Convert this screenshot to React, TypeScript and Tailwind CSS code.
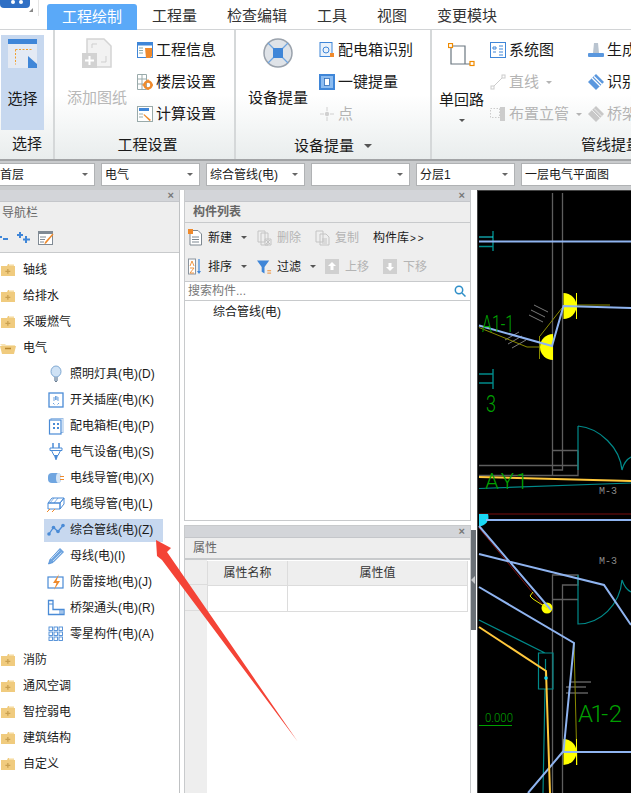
const font = "font-['Liberation_Sans','Noto_Sans_CJK_SC',sans-serif]";

const tabs = [
  { label: "工程量", w: "w-[75px]" },
  { label: "检查编辑", w: "w-[90px]" },
  { label: "工具", w: "w-[60px]" },
  { label: "视图", w: "w-[60px]" },
  { label: "变更模块", w: "w-[90px]" },
];

function FolderIcon({ open }: { open?: boolean }) {
  if (open) {
    return (
      <svg width="16" height="14" viewBox="0 0 16 14" className="shrink-0">
        <path d="M0 3h5l1 1h9v2H3z" fill="#f7e3b4" />
        <path d="M0 5h16l-2 8H2z" fill="#f0cb7e" />
        <path d="M5 7.500h6" stroke="#b9872f" strokeWidth="1.500" />
      </svg>
    );
  }
  return (
    <svg width="16" height="14" viewBox="0 0 16 14" className="shrink-0">
      <path d="M1 3h6l1-2h6v2h1v10H1z" fill="#f0cb7e" />
      <path d="M9 1h5v1.500H9z" fill="#fbeccb" />
      <path d="M7.200 6h1.300v1.800h1.800v1.200H8.500v1.800H7.200V9H5.400V7.800h1.800z" fill="#c9a050" />
    </svg>
  );
}

function ChildIcon({ name }: { name: string }) {
  const b = "#4a8bd6";
  const common = { width: 18, height: 18, viewBox: "0 0 18 18", className: "shrink-0" };
  switch (name) {
    case "bulb":
      return (
        <svg {...common}>
          <ellipse cx="9" cy="6.500" rx="5" ry="5.500" fill="#cfe2f5" stroke="#7fa8d2" />
          <path d="M7 12h4v4H7z" fill="#9fb0c2" />
          <path d="M8 16.500h2" stroke="#6b7d90" />
        </svg>
      );
    case "socket":
      return (
        <svg {...common}>
          <rect x="2" y="2" width="14" height="14" fill="#fff" stroke={b} strokeWidth="1.300" />
          <path d="M7 6v4M8.500 5v4M11 6v4M9.800 5v4M6 12l1.500 1.500M12 12l-1.500 1.500" stroke={b} strokeWidth=".8" />
        </svg>
      );
    case "box":
      return (
        <svg {...common}>
          <rect x="4" y="1.500" width="12" height="14" fill="#fff" stroke="#9dbfe6" />
          <rect x="2.500" y="3" width="11.500" height="14" fill="#fff" stroke={b} strokeWidth="1.200" />
          <path d="M6 6h2v2H6zM10 6h2v2h-2zM6 10h2v2H6zM10 10h2v2h-2z" fill={b} />
        </svg>
      );
    case "plug":
      return (
        <svg {...common}>
          <path d="M6 0v5M12 0v5" stroke={b} strokeWidth="1.500" />
          <path d="M3 5h12v2.500H3zM4.500 7.500l2.500 5h4l2.500-5z" fill="#fff" stroke={b} />
          <path d="M7 12.500h4L9.500 17h-1z" fill={b} />
        </svg>
      );
    case "wire":
      return (
        <svg {...common}>
          <rect x="1" y="4" width="13" height="10" rx="4" fill="#6fa5e0" />
          <ellipse cx="11.500" cy="9" rx="2.500" ry="5" fill="#d5e5f6" />
          <path d="M13 7.500h4M13 10.500h4" stroke="#ef8a2c" strokeWidth="1" />
        </svg>
      );
    case "cable":
      return (
        <svg {...common}>
          <path d="M1 8l4-5h12l-4 5zM1 8h12v6H1zM13 8l4-5v6l-4 5z" fill="#fff" stroke={b} />
          <path d="M7 3l-4 5M11 3l-4 5" stroke={b} strokeWidth=".7" />
          <path d="M0 17l3-3M5 17l3-3" stroke="#ef8a2c" />
        </svg>
      );
    case "line":
      return (
        <svg {...common}>
          <path d="M2 13L6.500 6.500l4.500 4L16.500 4" fill="none" stroke={b} strokeWidth="1.300" />
          <circle cx="2" cy="13" r="1.800" fill={b} />
          <circle cx="6.500" cy="6.500" r="1.800" fill={b} />
          <circle cx="11" cy="10.500" r="1.800" fill={b} />
          <circle cx="16" cy="4.500" r="1.800" fill={b} />
        </svg>
      );
    case "pencil":
      return (
        <svg {...common}>
          <path d="M13 1.500l3.500 3.500L6 15.500l-4.500 1.500L3 12.500z" fill="#6fa5e0" stroke={b} strokeWidth=".8" />
          <path d="M4 12l8.500-8.500M6 14l8.500-8.500" stroke="#fff" strokeWidth=".6" />
        </svg>
      );
    case "bolt":
      return (
        <svg {...common}>
          <rect x="1" y="4" width="15" height="11" fill="#fff" stroke={b} strokeWidth="1.200" />
          <path d="M12 1L6 10h3.500L7 17l6-9H9.500z" fill="#ef8a2c" />
        </svg>
      );
    case "elbow":
      return (
        <svg {...common}>
          <path d="M1.500 1.500h4.500v9h11v5H1.500z" fill="#fff" stroke={b} strokeWidth="1.300" />
          <path d="M1.500 5h4.500M13 11v4M15 11v4" stroke={b} />
        </svg>
      );
    default:
      return (
        <svg {...common}>
          {[2, 7, 12].flatMap((y) =>
            [2, 7, 12].map((x) => (
              <rect key={`${x}-${y}`} x={x} y={y} width="3.500" height="3.500" fill="#fff" stroke={b} strokeWidth=".9" />
            )),
          )}
        </svg>
      );
  }
}

function Caret({ color = "#555" }: { color?: string }) {
  return <span className="inline-block w-0 h-0 border-x-[3px] border-x-transparent border-t-[3px]" style={{ borderTopColor: color }} />;
}

function RibbonRow({ icon, label, disabled, caret }: { icon: React.ReactNode; label: string; disabled?: boolean; caret?: boolean }) {
  return (
    <div className={`flex items-center h-[32px] gap-[3px] text-[15px] whitespace-nowrap ${disabled ? "text-[#b4b4b4]" : "text-[#1a1a1a]"}`}>
      <span className="w-[16px] h-[18px] flex items-center justify-center shrink-0">{icon}</span>
      <span>{label}</span>
      {caret && <span className="ml-[4px] flex"><Caret color="#b4b4b4" /></span>}
    </div>
  );
}

function RibbonLarge({ icon, label, disabled, w }: { icon: React.ReactNode; label: string; disabled?: boolean; w: string }) {
  return (
    <div className={`flex flex-col items-center h-[95px] shrink-0 ${w}`}>
      <div className="h-[51px] pt-[3px] flex items-start justify-center">{icon}</div>
      <div className={`text-[15px] leading-[24px] whitespace-nowrap ${disabled ? "text-[#b8b8b8]" : "text-[#1a1a1a]"}`}>{label}</div>
    </div>
  );
}

function GroupLabel({ children }: { children: React.ReactNode }) {
  return <div className="h-[28px] flex items-center justify-center gap-[10px] text-[15px] text-[#1a1a1a] whitespace-nowrap">{children}</div>;
}

function Ribbon() {
  const o = "#ef8a2c";
  const b = "#3f86d8";
  return (
    <div className="h-[129px] flex bg-gradient-to-b from-white from-50% to-[#e9eded]">
      <div className="w-[55px] shrink-0 border-r-2 border-[#d5d8d9] pl-[1px] pt-[5px]">
        <div className="w-[43px] h-[95px] bg-[#c7d8ef] flex flex-col items-center">
          <svg width="29" height="29" viewBox="0 0 29 29" className="mt-[4px]">
            <rect width="29" height="29" fill="#e4eaf4" />
            <rect width="29" height="5" fill="#3f86d8" />
            <path d="M7.500 10.500h17M7.500 10.500v15" stroke="#f0a030" strokeDasharray="2 1.500" fill="none" />
            <path d="M20 17l9 8v4h-9z" fill="#3f86d8" />
          </svg>
          <div className="mt-[19px] text-[15px] leading-[24px] text-[#1a1a1a]">选择</div>
        </div>
        <GroupLabel>选择</GroupLabel>
      </div>

      <div className="w-[181px] shrink-0 border-r-2 border-[#d5d8d9]">
        <div className="flex h-[101px] pt-[5px] pl-[12px]">
          <RibbonLarge
            w="w-[60px]"
            disabled
            label="添加图纸"
            icon={
              <svg width="30" height="31" viewBox="0 0 30 31">
                <path d="M5 1h17l7 7v21H5z" fill="#f2f2f2" stroke="#d4d4d4" strokeWidth="1.500" />
                <path d="M10 10V6h5M24 18v6h-5" fill="none" stroke="#cfcfcf" />
                <rect x="0" y="15" width="15" height="15" fill="#d2d2d2" />
                <path d="M7.500 18v9M3 22.500h9" stroke="#fff" strokeWidth="2" />
              </svg>
            }
          />
          <div className="ml-[10px] flex flex-col -mt-[1px]">
            <RibbonRow
              label="工程信息"
              icon={
                <svg width="16" height="16" viewBox="0 0 16 16">
                  <rect x=".5" y=".5" width="15" height="15" fill="#fff" stroke={b} />
                  <rect width="16" height="3.500" fill={b} />
                  <path d="M2 6h4M2 8.500h4M2 11h4" stroke="#8aa" />
                  <path d="M8 6h7v8l-2 2H9z" fill={o} />
                </svg>
              }
            />
            <RibbonRow
              label="楼层设置"
              icon={
                <svg width="16" height="16" viewBox="0 0 16 16">
                  <path d="M.5.500h9v15h-9zM.5 5h9M.5 10h9M5 .5v15" fill="none" stroke="#9aa" />
                  <circle cx="11" cy="11" r="3.500" fill="none" stroke={o} strokeWidth="2.500" />
                  <path d="M11 5.500v2M11 14.500v2M5.500 11h2M14.500 11h2" stroke={o} strokeWidth="1.500" />
                </svg>
              }
            />
            <RibbonRow
              label="计算设置"
              icon={
                <svg width="16" height="16" viewBox="0 0 16 16">
                  <rect x=".5" y=".5" width="15" height="15" fill="#fff" stroke="#9aa" />
                  <rect x="2" y="2" width="10" height="3" fill={b} />
                  <path d="M2 8h4M2 11h4" stroke="#9aa" />
                  <path d="M7 8l7 6-1.500 1-6-6z" fill={o} />
                </svg>
              }
            />
          </div>
        </div>
        <GroupLabel>
          <span className="pl-[6px]">工程设置</span>
        </GroupLabel>
      </div>

      <div className="w-[196px] shrink-0 border-r-2 border-[#d5d8d9]">
        <div className="flex h-[101px] pt-[5px] pl-[12px]">
          <RibbonLarge
            w="w-[60px]"
            label="设备提量"
            icon={
              <svg width="30" height="30" viewBox="0 0 30 30">
                <circle cx="15" cy="15" r="14" fill="#dfe3e8" stroke="#9aa2ac" strokeWidth="1.500" />
                <path d="M5 5l20 20M25 5L5 25" stroke="#6fa5e0" strokeWidth="1.200" />
                <rect x="10" y="10" width="10" height="10" fill="#3f86d8" />
              </svg>
            }
          />
          <div className="ml-[11px] flex flex-col -mt-[1px]">
            <RibbonRow
              label="配电箱识别"
              icon={
                <svg width="16" height="16" viewBox="0 0 16 16">
                  <rect x="1" y=".5" width="12" height="14" fill="#eaf2fb" stroke={b} />
                  <circle cx="7" cy="8" r="3" fill="none" stroke={b} />
                  <rect x="11" y="11" width="4" height="4" fill={o} />
                </svg>
              }
            />
            <RibbonRow
              label="一键提量"
              icon={
                <svg width="16" height="16" viewBox="0 0 16 16">
                  <rect width="16" height="16" fill={b} />
                  <rect x="2" y="2" width="12" height="12" fill="#8cbcf0" />
                  <rect x="5.500" y="4.500" width="5" height="7" fill="#fff" stroke="#2d6cb8" strokeWidth=".8" />
                </svg>
              }
            />
            <RibbonRow
              disabled
              label="点"
              icon={
                <svg width="16" height="16" viewBox="0 0 16 16">
                  <circle cx="8" cy="8" r="2.200" fill="#d0d0d0" />
                  <path d="M8 1v4M8 11v4M1 8h4M11 8h4" stroke="#d0d0d0" />
                </svg>
              }
            />
          </div>
        </div>
        <div className="h-[28px] pt-[1px]">
          <GroupLabel>
            <span>设备提量</span>
            <span className="inline-block w-0 h-0 border-x-[4px] border-x-transparent border-t-[4px] border-t-[#555]" />
          </GroupLabel>
        </div>
      </div>

      <div className="flex-1 min-w-0 overflow-hidden">
        <div className="flex h-[101px] pt-[5px] pl-[6px]">
          <div className="w-[47px] shrink-0 flex flex-col items-center h-[95px]">
            <svg width="27" height="24" viewBox="0 0 27 24" className="mt-[8px]">
              <path d="M3 3h14v18h6M3 3v18h20" fill="none" stroke="#6b7780" strokeWidth="1.200" />
              <rect x=".5" y=".5" width="4" height="4" fill="#fff" stroke="#ef8a00" strokeWidth="1.200" />
              <rect x="22" y="18.500" width="4" height="4" fill="#fff" stroke="#ef8a00" strokeWidth="1.200" />
            </svg>
            <div className="mt-[21px] text-[15px] leading-[24px] text-[#1a1a1a] whitespace-nowrap">单回路</div>
            <div className="mt-[7px] flex"><Caret /></div>
          </div>
          <div className="ml-[5px] w-[98px] shrink-0 flex flex-col -mt-[1px]">
            <RibbonRow
              label="系统图"
              icon={
                <svg width="16" height="16" viewBox="0 0 16 16">
                  <rect x=".5" y=".5" width="15" height="15" fill="#fff" stroke={b} />
                  <path d="M3 5h3v2H3zM9 4h4M9 7h4M9 10h4M9 13h4M3 10h3" stroke={b} fill="none" />
                </svg>
              }
            />
            <RibbonRow
              disabled
              caret
              label="直线"
              icon={
                <svg width="16" height="16" viewBox="0 0 16 16">
                  <path d="M3 13L13 3" stroke="#ccc" />
                  <rect x="1" y="12" width="3" height="3" fill="#fff" stroke="#ccc" />
                  <rect x="12" y="1" width="3" height="3" fill="#fff" stroke="#ccc" />
                </svg>
              }
            />
            <RibbonRow
              disabled
              caret
              label="布置立管"
              icon={
                <svg width="16" height="16" viewBox="0 0 16 16">
                  <rect x=".5" y="2.500" width="9" height="9" fill="none" stroke="#ccc" strokeDasharray="1.500 1.500" />
                  <rect x="10" y="1" width="5" height="14" fill="#ccc" />
                </svg>
              }
            />
          </div>
          <div className="flex flex-col -mt-[1px] shrink-0">
            <RibbonRow
              label="生成"
              icon={
                <svg width="16" height="16" viewBox="0 0 16 16">
                  <path d="M6 1h4l1 10H5z" fill="#b9c4d0" />
                  <rect y="11" width="16" height="4" rx="1" fill="#5a97de" />
                </svg>
              }
            />
            <RibbonRow
              label="识别"
              icon={
                <svg width="16" height="16" viewBox="0 0 16 16">
                  <path d="M0 8l8-8 8 8-8 8z" fill="#5a97de" />
                  <path d="M4 4l8 8M6 2.500l8 8" stroke="#fff" strokeWidth="1.200" />
                </svg>
              }
            />
            <RibbonRow
              disabled
              label="桥架"
              icon={
                <svg width="16" height="16" viewBox="0 0 16 16">
                  <path d="M0 8l8-8 8 8-8 8z" fill="#c8c8c8" />
                  <path d="M4 4l8 8M6 2.500l8 8" stroke="#eee" />
                </svg>
              }
            />
          </div>
        </div>
        <div className="h-[28px] pl-[149px] flex items-center text-[15px] text-[#1a1a1a] whitespace-nowrap">管线提量</div>
      </div>
    </div>
  );
}

function SelectBox({ label, w }: { label: string; w: string }) {
  return (
    <div className={`h-[23px] shrink-0 bg-white border border-[#b0b2b4] flex items-center justify-between pl-[3px] pr-[6px] text-[12px] text-[#1a1a1a] whitespace-nowrap ${w}`}>
      <span>{label}</span>
      <Caret color="#666" />
    </div>
  );
}

function PanelStrip() {
  return (
    <div className="h-[12px] bg-[#d3d5d9] flex items-center justify-end pr-[5px] border-b border-[#c4c6ca]">
      <span className="text-[#777] text-[11px] leading-none font-bold">×</span>
    </div>
  );
}

const topFolders = ["轴线", "给排水", "采暖燃气"];
const children = [
  { label: "照明灯具(电)(D)", icon: "bulb" },
  { label: "开关插座(电)(K)", icon: "socket" },
  { label: "配电箱柜(电)(P)", icon: "box" },
  { label: "电气设备(电)(S)", icon: "plug" },
  { label: "电线导管(电)(X)", icon: "wire" },
  { label: "电缆导管(电)(L)", icon: "cable" },
  { label: "综合管线(电)(Z)", icon: "line", active: true },
  { label: "母线(电)(I)", icon: "pencil" },
  { label: "防雷接地(电)(J)", icon: "bolt" },
  { label: "桥架通头(电)(R)", icon: "elbow" },
  { label: "零星构件(电)(A)", icon: "grid" },
];
const bottomFolders = ["消防", "通风空调", "智控弱电", "建筑结构", "自定义"];

function FolderRow({ label, open }: { label: string; open?: boolean }) {
  return (
    <div className="h-[26px] flex items-center text-[12px] text-[#1a1a1a]">
      <FolderIcon open={open} />
      <span className="ml-[7px]">{label}</span>
    </div>
  );
}

function NavPanel() {
  return (
    <div className="w-[180px] shrink-0 border-r border-[#bfc1c3] flex flex-col bg-white">
      <PanelStrip />
      <div className="h-[21px] bg-[#eeeeee] flex items-center text-[12px] text-[#666] pl-[2px]">导航栏</div>
      <div className="h-[30px] bg-[#eeeeee] border-b border-[#c8cacc] flex items-center">
        <svg width="10" height="8" viewBox="0 0 10 8"><path d="M0 3h2M3 5h5" stroke="#3f86d8" strokeWidth="2" /></svg>
        <svg width="14" height="12" viewBox="0 0 14 12" className="ml-[7px]">
          <path d="M3 0v6M0 3h6M9 4v7M6 7.500h7" stroke="#3f86d8" strokeWidth="2" />
        </svg>
        <svg width="16" height="14" viewBox="0 0 16 14" className="ml-[7px]">
          <rect x=".5" y=".5" width="14" height="13" fill="#fff" stroke="#808a94" />
          <rect width="15" height="3" fill="#808a94" />
          <path d="M2 6h6M2 8.500h5M2 11h4" stroke="#808a94" />
          <path d="M15.500 3.500L8 12.500l-1.500.5.500-2 7.500-8.500z" fill="#ef8a2c" />
        </svg>
      </div>
      <div className="pt-[4px]">
        {topFolders.map((f) => (
          <FolderRow key={f} label={f} />
        ))}
        <FolderRow label="电气" open />
        {children.map((c) => (
          <div key={c.label} className="h-[26px] flex items-center pl-[44px]">
            <div className={`w-[119px] h-[23px] flex items-center pl-[3px] text-[12px] text-[#1a1a1a] whitespace-nowrap ${c.active ? "bg-[#c7d8ef]" : ""}`}>
              <ChildIcon name={c.icon} />
              <span className="ml-[5px]">{c.label}</span>
            </div>
          </div>
        ))}
        {bottomFolders.map((f) => (
          <FolderRow key={f} label={f} />
        ))}
      </div>
    </div>
  );
}

function ToolBtn({ icon, label, disabled, caret, w }: { icon: React.ReactNode; label: string; disabled?: boolean; caret?: boolean; w: string }) {
  return (
    <div className={`flex items-center shrink-0 text-[12px] whitespace-nowrap ${w} ${disabled ? "text-[#b4b4b4]" : "text-[#1a1a1a]"}`}>
      <span className="w-[15px] h-[18px] flex items-center justify-center shrink-0">{icon}</span>
      <span className="ml-[5px]">{label}</span>
      {caret && <span className="ml-[9px] flex"><Caret /></span>}
    </div>
  );
}

function ListPanel() {
  const grey = "#c4c4c4";
  return (
    <div className="h-[331px] shrink-0 border-x border-b border-[#c8cacc] flex flex-col">
      <PanelStrip />
      <div className="h-[21px] bg-[#eeeeee] border-b border-[#c8cacc] flex items-center pl-[8px] text-[12px] font-bold text-[#666]">构件列表</div>
      <div className="h-[29px] bg-[#eeeeee] flex items-center pl-[3px]">
        <ToolBtn
          w="w-[69px]"
          label="新建"
          caret
          icon={
            <svg width="15" height="17" viewBox="0 0 15 17">
              <path d="M2 1.500h8l3.500 3.500v11H2z" fill="#fff" stroke="#7d8790" />
              <path d="M4 8h7M4 10.500h7M4 13h7" stroke="#7d8790" />
              <rect width="5" height="5" fill="#ef8a2c" />
            </svg>
          }
        />
        <ToolBtn
          w="w-[58px]"
          disabled
          label="删除"
          icon={
            <svg width="15" height="16" viewBox="0 0 15 16" fill="none" stroke={grey}>
              <path d="M1 1h7v11H1zM4 3h7v12H4z" fill="#eee" />
              <path d="M8 9h6v6H8zM9 10l4 4M13 10l-4 4" />
            </svg>
          }
        />
        <ToolBtn
          w="w-[58px]"
          disabled
          label="复制"
          icon={
            <svg width="15" height="16" viewBox="0 0 15 16" fill="none" stroke={grey}>
              <path d="M1 1h7v11H1zM5 4h6l3 3v8H5z" fill="#eee" />
              <path d="M7 9h5M7 11h5M7 13h5" />
            </svg>
          }
        />
        <span className="text-[12px] text-[#1a1a1a] whitespace-nowrap">
          构件库<span className="text-[10px] tracking-[2px] ml-px">&gt;&gt;</span>
        </span>
      </div>
      <div className="h-[29px] bg-[#eeeeee] flex items-center pl-[3px]">
        <ToolBtn
          w="w-[69px]"
          label="排序"
          caret
          icon={
            <svg width="15" height="18" viewBox="0 0 15 18">
              <rect x=".5" y="1" width="7" height="15" fill="#fff" stroke="#8a949e" />
              <path d="M2 8l2-5 2 5M2 10h4L2 15h4" fill="none" stroke="#ef8a2c" strokeWidth=".9" />
              <path d="M11 1v13" stroke="#3f86d8" strokeWidth="1.200" />
              <path d="M9 13h4l-2 3z" fill="#3f86d8" />
            </svg>
          }
        />
        <ToolBtn
          w="w-[68px]"
          label="过滤"
          caret
          icon={
            <svg width="16" height="16" viewBox="0 0 16 16">
              <path d="M0 1h13L8 8v7l-3-2V8z" fill="#3f86d8" />
              <path d="M11 12h4M11 14.500h4" stroke="#ef8a2c" />
            </svg>
          }
        />
        <ToolBtn
          w="w-[58px]"
          disabled
          label="上移"
          icon={
            <svg width="15" height="15" viewBox="0 0 15 15">
              <rect width="14" height="15" fill="#d0d0d0" />
              <path d="M7 3L3 7h2.500v4h3V7H11z" fill="#fff" />
            </svg>
          }
        />
        <ToolBtn
          w="w-[50px]"
          disabled
          label="下移"
          icon={
            <svg width="15" height="15" viewBox="0 0 15 15">
              <rect width="14" height="15" fill="#d0d0d0" />
              <path d="M7 12L3 8h2.500V4h3v4H11z" fill="#fff" />
            </svg>
          }
        />
      </div>
      <div className="h-[20px] border-y border-[#c8cacc] flex items-center justify-between pl-[3px] pr-[4px] text-[12px] text-[#777] bg-white">
        <span>搜索构件...</span>
        <svg width="12" height="12" viewBox="0 0 12 12" fill="none" stroke="#2f8fc8" strokeWidth="1.500">
          <circle cx="5" cy="5" r="3.700" />
          <path d="M8 8l3.500 3.500" />
        </svg>
      </div>
      <div className="flex-1 bg-white pl-[28px] pt-[2px] text-[12px] leading-[18px] text-[#1a1a1a]">综合管线(电)</div>
    </div>
  );
}

function PropsPanel() {
  return (
    <div className="flex-1 min-h-0 border-x border-t border-[#c8cacc] flex flex-col">
      <PanelStrip />
      <div className="h-[22px] bg-[#eeeeee] border-b-2 border-[#c8cacc] flex items-center pl-[8px] text-[12px] text-[#666]">属性</div>
      <div className="flex-1 flex bg-white">
        <div className="w-[22px] shrink-0 bg-[#eeeeee]">
          <div className="h-[25px] border-b border-[#dcdcdc]" />
          <div className="h-[26px] border-b border-[#dcdcdc]" />
        </div>
        <div className="w-[261px] mt-[1px]">
          <div className="h-[25px] flex bg-[#eeeeee] border-b border-[#dcdcdc] text-[12px] text-[#333]">
            <div className="w-[81px] border-x border-[#dcdcdc] flex items-center justify-center">属性名称</div>
            <div className="w-[180px] border-r border-[#dcdcdc] flex items-center justify-center">属性值</div>
          </div>
          <div className="h-[26px] flex border-b border-[#dcdcdc]">
            <div className="w-[81px] border-x border-[#dcdcdc]" />
            <div className="w-[180px] border-r border-[#dcdcdc]" />
          </div>
        </div>
      </div>
    </div>
  );
}

function CadCanvas() {
  const blue = "#8fb4f0";
  const gray = "#5e5e5e";
  const teal = "#008a8a";
  const olive = "#8a8a00";
  const green = "#00a000";
  const orange = "#ffc83c";
  const thin = { fill: "none", strokeWidth: 1 };
  return (
    <svg viewBox="477 190 154 603" className="w-[154px] h-[603px] bg-black block">
      <path d="M477 793V190H631" fill="none" stroke="#444" strokeWidth="2" />
      <g {...thin} stroke={gray} strokeWidth="1.300">
        <path d="M552.500 193V475M562.500 193V470H552.500M553 450.500H578M479 465.500H578M479 475.500H578V450.500" />
        <path d="M552.500 793V575H578V585H562.500V793M553 599.500H578" />
        <path d="M505 340l14-8M508 344l14-8M512 348l14-8M548 312l-14-7M545 317l-14-7M543 322l-14-7" strokeWidth=".8" stroke="#999" />
        <path d="M570 682H591M566 687H586M566 693H588" />
      </g>
      <g {...thin} stroke={teal}>
        <path d="M479 246.500H493M479 374H493M479 383H493M493 231V251M493 369V389" stroke={teal} strokeWidth="1.400" />
        <path d="M578 426V470M578 426C600 428 620 448 622 470C624 462 627 459 631 457M578 575V624C600 624 620 605 622 580C624 586 627 590 631 592" strokeWidth="1.200" />
        <path d="M479 488.500L631 483M479 620L545 653M538.500 653H553V689H538.500ZM545.500 659V680M545 689L543 793" strokeWidth="1.200" />
      </g>
      <path d="M479 237H493" stroke="#19e6f0" />
      <g fill="none" stroke={olive}>
        <path d="M479 327.500L527 347H540M539.500 336V359M540 336L562 308M565 305L610 305M574 643L577 765" />
      </g>
      <path d="M479 514H631M479 528L547 610" stroke="#7a0f0f" fill="none" />
      <path d="M563.500 293A13 13 0 0 1 563.500 319Z" fill="#ffff00" />
      <path d="M576.500 293V319" stroke="#ffff00" />
      <path d="M553 334A13 13 0 0 0 553 360Z" fill="#ffff00" />
      <path d="M563.500 739A13 13 0 0 1 563.500 765Z" fill="#ffff00" />
      <path d="M576.500 739V765" stroke="#ffff00" />
      <circle cx="547" cy="608" r="5.500" fill="#ffff00" />
      <path d="M547 608L533 599L530 596L533 592" fill="none" stroke="#e6e600" />
      <path d="M479 514H488A9 9 0 0 1 479 526Z" fill="#19d8f5" />
      <g fill="none" stroke={blue}>
        <path d="M479 241.500H631" strokeWidth="1.800" />
        <path d="M479 325.500L552 346L563.500 306L631 308" strokeWidth="2" />
        <path d="M486 520H631M479 526L551 610M479 554L604 585L631 625M479 587L574 643L563.500 751L528 793M563.500 752H631" strokeWidth="2" />
      </g>
      <path d="M479 477L631 481" stroke={orange} strokeWidth="2" />
      <path d="M479 627L546 671L550 793" fill="none" stroke={orange} strokeWidth="2" />
      <circle cx="546" cy="678" r="1.800" fill="#19d8f5" />
      <path d="M479 725.500H512" stroke={green} />
      <g fill={green} fontFamily="Roboto, 'Liberation Sans', sans-serif" fontWeight="300">
        <text x="482" y="332" fontSize="24" textLength="32" lengthAdjust="spacingAndGlyphs">A1-1</text>
        <text x="486" y="412" fontSize="24" textLength="10" lengthAdjust="spacingAndGlyphs">3</text>
        <text x="485" y="489" fontSize="22" textLength="43" lengthAdjust="spacing">A Y 1</text>
        <text x="578" y="722" fontSize="24" textLength="44" lengthAdjust="spacing">A1- 2</text>
        <text x="485" y="722" fontSize="13" textLength="28" lengthAdjust="spacingAndGlyphs">0.000</text>
      </g>
      <g fill="#8a8a8a" fontFamily="'Liberation Mono', monospace" fontSize="10">
        <text x="599" y="494">M-3</text>
        <text x="599" y="564">M-3</text>
      </g>
    </svg>
  );
}

export default function App() {
  return (
    <div className={`relative w-[631px] h-[793px] overflow-hidden bg-white flex flex-col ${font}`}>
      <div className="h-[30px] shrink-0 flex border-b border-[#d2d4d6] bg-white">
        <div className="w-[47px] shrink-0 relative">
          <div className="absolute left-0 top-0 w-[30px] h-[8px] bg-[#2f6fc4] rounded-b-[4px]">
            <span className="absolute left-[11px] top-0 w-[4px] h-[4px] rounded-full bg-white" />
            <span className="absolute left-[19px] top-0 w-[4px] h-[4px] rounded-full bg-white" />
          </div>
          <span className="absolute right-[14px] top-[8px] w-0 h-0 border-l-[4px] border-l-transparent border-b-[4px] border-b-[#888]" />
          <span className="absolute right-[8px] top-0 w-px h-[16px] bg-[#e4e4e4]" />
        </div>
        <div className="w-[90px] h-[26px] mt-[4px] rounded-t-[3px] bg-[#5aa9f8] text-white text-[15px] flex items-center justify-center">工程绘制</div>
        {tabs.map((t) => (
          <div key={t.label} className={`${t.w} shrink-0 text-[15px] text-[#333] flex items-center justify-center pt-[4px]`}>
            {t.label}
          </div>
        ))}
      </div>

      <Ribbon />

      <div className="h-[31px] shrink-0 bg-[#c9cbcd] border-t-2 border-[#a2a4a6] flex items-center gap-[6px] pb-[2px]">
        <SelectBox w="w-[99px] -ml-[4px]" label="首层" />
        <SelectBox w="w-[99px]" label="电气" />
        <SelectBox w="w-[99px]" label="综合管线(电)" />
        <SelectBox w="w-[99px]" label="" />
        <SelectBox w="w-[99px]" label="分层1" />
        <div className="h-[23px] flex-1 bg-white border border-r-0 border-[#b0b2b4] pl-[3px] flex items-center text-[12px] text-[#1a1a1a] whitespace-nowrap">一层电气平面图</div>
      </div>

      <div className="flex-1 min-h-0 flex">
        <NavPanel />
        <div className="w-[287px] shrink-0 ml-[4px] flex flex-col">
          <ListPanel />
          <div className="h-[4px] shrink-0" />
          <PropsPanel />
        </div>
        <div className="w-[6px] shrink-0 relative">
          <div className="absolute left-0 top-[340px] w-[5px] h-[100px] bg-[#6a7076] flex items-center">
            <span className="w-0 h-0 border-y-[4px] border-y-transparent border-r-[4px] border-r-[#c8cacc]" />
          </div>
        </div>
        <CadCanvas />
      </div>

      <svg className="absolute left-0 top-0 pointer-events-none" width="631" height="793" viewBox="0 0 631 793">
        <polygon points="156,540 171,548 167,552 298,742 162,560 157,556" fill="#f44336" />
      </svg>
    </div>
  );
}
